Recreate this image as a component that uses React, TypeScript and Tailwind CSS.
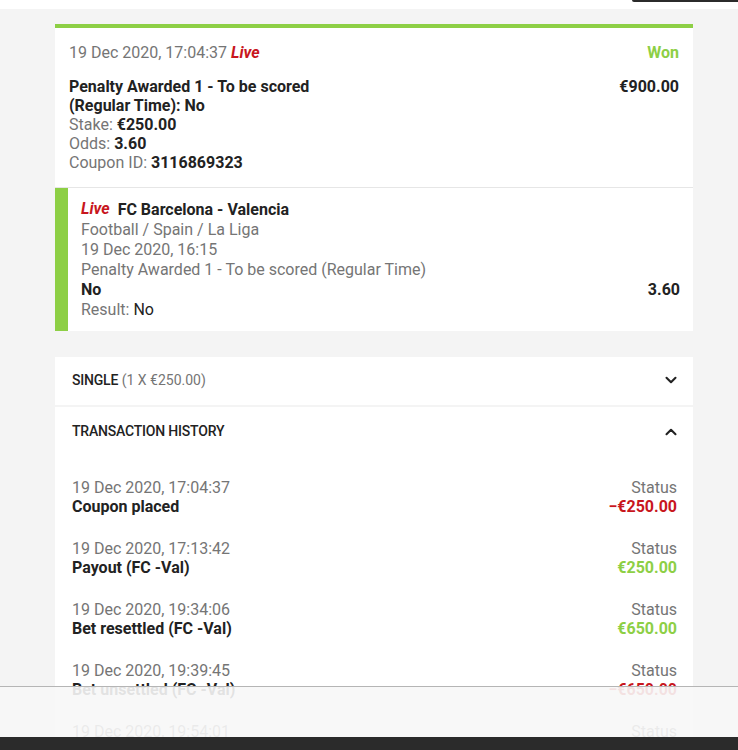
import { ChevronDown, ChevronUp } from 'lucide-react';

interface Transaction {
  date: string;
  title: string;
  amount: string;
  positive: boolean;
}

const transactions: Transaction[] = [
  { date: '19 Dec 2020, 17:04:37', title: 'Coupon placed', amount: '−€250.00', positive: false },
  { date: '19 Dec 2020, 17:13:42', title: 'Payout (FC -Val)', amount: '€250.00', positive: true },
  { date: '19 Dec 2020, 19:34:06', title: 'Bet resettled (FC -Val)', amount: '€650.00', positive: true },
  { date: '19 Dec 2020, 19:39:45', title: 'Bet unsettled (FC -Val)', amount: '−€650.00', positive: false },
  { date: '19 Dec 2020, 19:54:01', title: 'Payout (FC -Val)', amount: '€650.00', positive: true },
];

export default function App() {
  return (
    <div className="min-h-screen bg-[#f4f4f4] font-['Roboto',sans-serif] text-[16px] leading-[19px] text-[#222]">
      {/* top strip */}
      <div className="relative h-[9px] bg-white">
        <div className="absolute right-0 top-0 h-[2px] w-[106px] rounded-bl-sm bg-[#2b2b2b]" />
      </div>

      <div className="ml-[55px] w-[638px] pt-[15px] pb-[120px]">
        {/* Bet card */}
        <div className="border-t-4 border-[#8dcf45] bg-white">
          <div className="px-[14px] pt-[15px] pb-[15px]">
            <div className="flex items-center justify-between">
              <div className="text-[#757575]">
                19 Dec 2020, 17:04:37{' '}
                <span className="font-bold italic text-[#c8161d]">Live</span>
              </div>
              <div className="font-bold text-[#8dcf45]">Won</div>
            </div>
            <div className="mt-[15px] flex justify-between">
              <div>
                <div className="font-bold">
                  Penalty Awarded 1 - To be scored
                  <br />
                  (Regular Time): No
                </div>
                <div className="text-[#757575]">
                  Stake: <span className="font-bold text-[#222]">€250.00</span>
                </div>
                <div className="text-[#757575]">
                  Odds: <span className="font-bold text-[#222]">3.60</span>
                </div>
                <div className="text-[#757575]">
                  Coupon ID: <span className="font-bold text-[#222]">3116869323</span>
                </div>
              </div>
              <div className="font-bold">€900.00</div>
            </div>
          </div>

          {/* Selection */}
          <div className="flex border-t border-[#e6e6e6]">
            <div className="w-[13px] shrink-0 bg-[#8dcf45]" />
            <div className="flex-1 pl-[13px] pr-[13px] pt-[12px] pb-[11px] leading-[20px]">
              <div className="flex items-center gap-[8px]">
                <span className="-mt-[3px] font-bold italic text-[#c8161d]">Live</span>
                <span className="font-bold">FC Barcelona - Valencia</span>
              </div>
              <div className="text-[#757575]">Football / Spain / La Liga</div>
              <div className="text-[#757575]">19 Dec 2020, 16:15</div>
              <div className="text-[#757575]">Penalty Awarded 1 - To be scored (Regular Time)</div>
              <div className="flex justify-between font-bold">
                <span>No</span>
                <span>3.60</span>
              </div>
              <div className="text-[#757575]">
                Result: <span className="text-[#222]">No</span>
              </div>
            </div>
          </div>
        </div>

        {/* Details card */}
        <div className="mt-[26px] bg-white">
          <div className="flex h-[48px] items-center justify-between pb-[2px] pl-[17px] pr-[13px] text-[14px]">
            <div>
              <span className="font-medium uppercase tracking-[-0.2px]">Single</span>{' '}
              <span className="text-[#757575]">(1 X €250.00)</span>
            </div>
            <ChevronDown size={18} strokeWidth={2.75} className="text-[#222]" />
          </div>
          <div className="h-[2px] bg-[#f4f4f4]" />
          <div className="flex h-[47px] items-center justify-between pt-[2px] pl-[17px] pr-[13px] text-[14px]">
            <span className="font-medium uppercase tracking-[-0.2px]">Transaction history</span>
            <ChevronUp size={18} strokeWidth={2.75} className="text-[#222]" />
          </div>
          <div className="flex flex-col gap-[23px] pl-[17px] pr-[16px] pt-[24px] pb-[24px]">
            {transactions.map((t) => (
              <div key={t.date} className="flex justify-between">
                <div>
                  <div className="text-[#757575]">{t.date}</div>
                  <div className="font-bold">{t.title}</div>
                </div>
                <div className="text-right">
                  <div className="text-[#757575]">Status</div>
                  <div className={t.positive ? 'font-bold text-[#8dcf45]' : 'font-bold text-[#c8161d]'}>
                    {t.amount}
                  </div>
                </div>
              </div>
            ))}
          </div>
        </div>
      </div>

      {/* bottom overlay */}
      <div className="fixed inset-x-0 bottom-[13px] h-[51px] border-t border-[#b5b5b5] bg-[#f7f7f7]/90" />
      <div className="fixed inset-x-0 bottom-0 h-[13px] bg-[#2b2b2b]" />
    </div>
  );
}
